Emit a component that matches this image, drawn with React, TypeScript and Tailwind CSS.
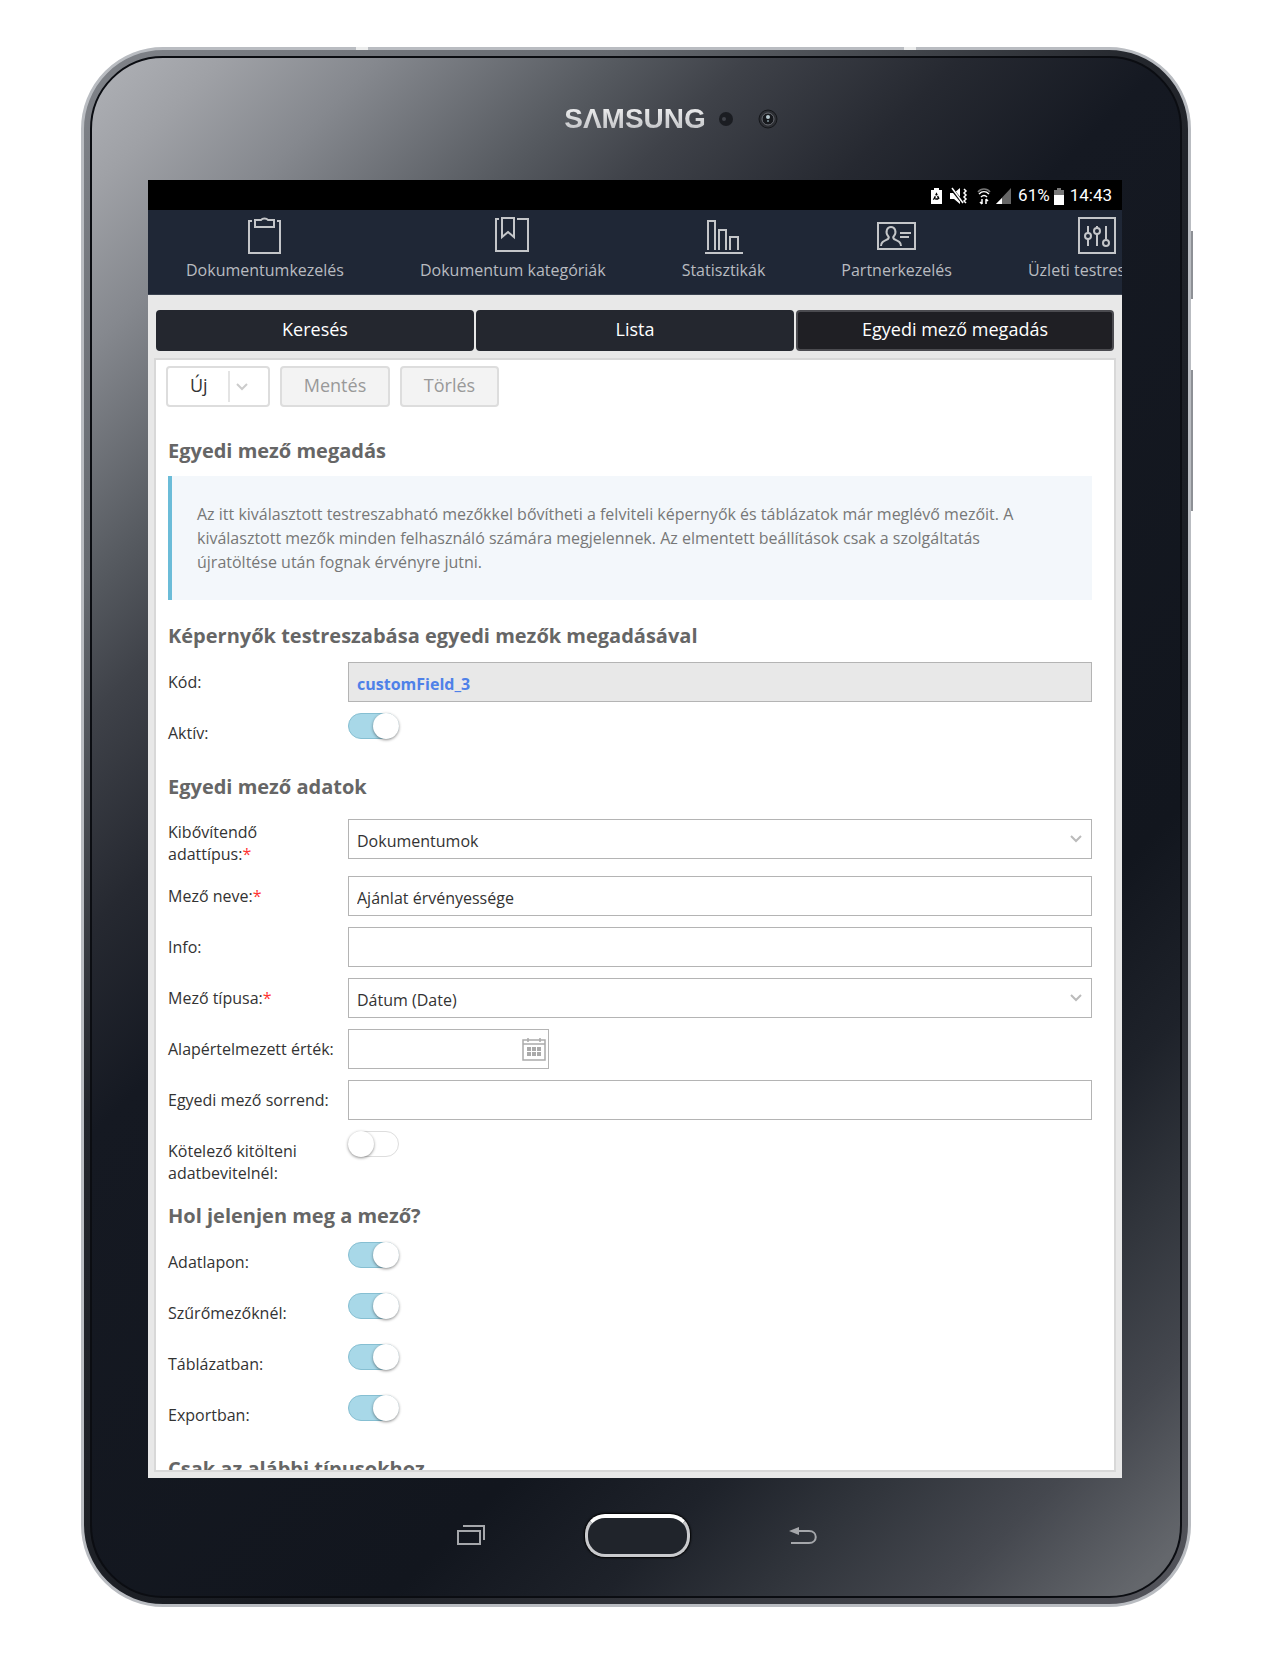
import { useState } from 'react';
import type { ReactNode } from 'react';

interface NavItem {
  title: string;
  icon: ReactNode;
}

const navItems: NavItem[] = [
  {
    title: 'Dokumentumkezelés',
    icon: (
      <>
        <path d="M8 6H5v32h31V6h-3" />
        <path d="M11 5h6a4 3 0 0 1 7 0h6v7H11z" />
      </>
    ),
  },
  {
    title: 'Dokumentum kategóriák',
    icon: (
      <>
        <path d="M7 4H4v32h32V4H25" />
        <path d="M10 3h12v19l-6-5-6 5z" />
      </>
    ),
  },
  {
    title: 'Statisztikák',
    icon: (
      <>
        <path d="M2 38h38" />
        <path d="M5 35V6h7v29M16 35V15h7v20M27 35V22h8v13" />
      </>
    ),
  },
  {
    title: 'Partnerkezelés',
    icon: (
      <>
        <path d="M2 8h37v26H2z" />
        <path d="M5 31c0-4 3-5 7-7 1-1 1-2 0-3-3-4-1-9 3-9s6 5 3 9c-1 1-1 2 0 3 4 2 7 3 7 7M24 18h11M24 22h9" />
      </>
    ),
  },
  {
    title: 'Üzleti testreszabás',
    icon: (
      <>
        <path d="M2 3h36v35H2z" />
        <path d="M11 11v7M11 24v7M20 11v2M20 19v12M29 11v13" />
        <circle cx="11" cy="21" r="3" />
        <circle cx="20" cy="16" r="3" />
        <circle cx="29" cy="28" r="3" />
      </>
    ),
  },
];

const tabs = ['Keresés', 'Lista', 'Egyedi mező megadás'];

const fieldClass = 'h-10 w-full border border-[#b4b4b4] bg-white px-2 pt-1 text-base text-[#333]';

function Heading({ children }: { children: ReactNode }) {
  return <h2 className="text-xl leading-7 font-bold text-[#666]">{children}</h2>;
}

interface RowProps {
  id: string;
  label: string;
  required?: boolean;
  children: ReactNode;
}

function Row({ id, label, required, children }: RowProps) {
  return (
    <div className="grid grid-cols-[180px_1fr] items-center">
      <label htmlFor={id} className="min-h-10 pt-[9px] pr-3 leading-[22px] text-[#333]">
        {label}
        {required && <span className="text-[#f33]">*</span>}
      </label>
      {children}
    </div>
  );
}

function Toggle({ id, defaultChecked = false }: { id: string; defaultChecked?: boolean }) {
  return (
    <span className="relative h-[26px] w-[51px] self-start">
      <input
        id={id}
        type="checkbox"
        role="switch"
        defaultChecked={defaultChecked}
        className="peer block h-[26px] w-[51px] appearance-none rounded-full border border-[#ddd] bg-white checked:border-[#86bfd2] checked:bg-[#a8d8e8]"
      />
      <span className="pointer-events-none absolute top-0 left-0 size-[26px] rounded-full bg-white shadow-[0_1px_3px_rgba(0,0,0,0.45)] peer-checked:left-[25px]" />
    </span>
  );
}

function SelectField({ id, value }: { id: string; value: string }) {
  return (
    <span className="relative">
      <select id={id} defaultValue={value} className={`${fieldClass} block appearance-none`}>
        <option>{value}</option>
      </select>
      <svg viewBox="0 0 12 8" className="pointer-events-none absolute top-4 right-2.5 h-2 w-3" fill="none" stroke="#bbb" strokeWidth="2">
        <path d="M1 1l5 5 5-5" />
      </svg>
    </span>
  );
}

function StatusBar() {
  return (
    <div className="flex h-[30px] shrink-0 items-center justify-end bg-black pt-0.5 pr-2.5 font-[Roboto,sans-serif] text-[17px] text-white">
      <svg viewBox="0 0 82 18" className="mr-1.5 h-[18px] w-[82px]" fill="none" stroke="#fff" strokeWidth="1.5">
        <path d="M1 3h3V1h5v2h3v14H1z" fill="#fff" stroke="none" />
        <path d="M4 12l2.5-5 2.5 5z" stroke="#000" strokeDasharray="3 1" />
        <path d="M20 6h4l6-5v16l-6-5h-4z" fill="#fff" stroke="none" />
        <path d="M21 1l12 15" stroke="#000" strokeWidth="3" />
        <path d="M22 1l11 15" />
        <path d="M34 2l2 2-2 2 2 2-2 2 2 2-2 2 2 2" />
        <path d="M48 5c3-4 9-4 12 0" stroke="#777" />
        <path d="M49 7c3-3 7-3 10 0M51 10c2-2 4-2 6 0" />
        <path d="M52 12v5M50 15l2 2M56 17v-5M58 14l-2-2" />
        <path d="M81 1v16H66z" fill="#666" stroke="none" />
        <path d="M72 11v6h-6z" fill="#fff" stroke="none" />
      </svg>
      <span>61%</span>
      <svg viewBox="0 0 10 17" className="mr-1.5 ml-1 h-[17px] w-2.5">
        <path d="M0 2h3V0h4v2h3v15H0z" fill="#777" />
        <path d="M0 7h10v10H0z" fill="#fff" />
      </svg>
      <span>14:43</span>
    </div>
  );
}

function MainNav() {
  return (
    <nav className="flex h-[85px] shrink-0 gap-[76px] overflow-hidden border-b border-[#3a4250] bg-[#1f2736] px-[38px]">
      {navItems.map((item) => (
        <a key={item.title} href="#" className="flex shrink-0 flex-col items-center pt-[5px] whitespace-nowrap text-[#b8bbc0]">
          <svg viewBox="0 0 41 40" className="h-10 w-[41px]" fill="none" stroke="#c4c6c9" strokeWidth="2">
            {item.icon}
          </svg>
          <span className="mt-1 leading-[22px]">{item.title}</span>
        </a>
      ))}
    </nav>
  );
}

function CustomFieldForm() {
  return (
    <form className="flex min-h-0 flex-1 flex-col overflow-hidden border-2 border-[#d8d8d8] bg-white pr-[22px] pl-3">
      <div className="-ml-0.5 flex shrink-0 gap-2.5 pt-1.5 text-lg leading-6">
        <button type="button" className="flex h-[41px] w-[104px] items-center rounded-sm border-2 border-[#ddd] bg-white pl-[22px] text-[#333]">
          <span className="pb-1">Új</span>
          <span className="ml-auto mr-5 flex h-[31px] items-center border-l-2 border-[#e4e4e4] pl-1.5">
            <svg viewBox="0 0 12 8" className="h-2 w-3" fill="none" stroke="#ccc" strokeWidth="2">
              <path d="M1 1l5 5 5-5" />
            </svg>
          </span>
        </button>
        <button type="button" className="h-[41px] w-[110px] rounded-sm border-2 border-[#ddd] bg-[#f3f3f3] pb-1 text-[#999]">
          Mentés
        </button>
        <button type="button" className="h-[41px] w-[99px] rounded-sm border-2 border-[#ddd] bg-[#f3f3f3] pb-1 text-[#999]">
          Törlés
        </button>
      </div>

      <div className="mt-[30px] shrink-0">
        <Heading>Egyedi mező megadás</Heading>
        <p className="mt-[11px] border-l-4 border-[#6bbcd8] bg-[#f3f7fb] py-[26px] pr-12 pl-[25px] leading-6 text-[#777]">
          Az itt kiválasztott testreszabható mezőkkel bővítheti a felviteli képernyők és táblázatok már meglévő mezőit. A
          kiválasztott mezők minden felhasználó számára megjelennek. Az elmentett beállítások csak a szolgáltatás
          újratöltése után fognak érvényre jutni.
        </p>
      </div>

      <section className="mt-[22px] shrink-0">
        <Heading>Képernyők testreszabása egyedi mezők megadásával</Heading>
        <div className="mt-3 flex flex-col gap-[11px]">
          <Row id="code" label="Kód:">
            <input
              id="code"
              readOnly
              defaultValue="customField_3"
              className="h-10 w-full border border-[#b4b4b4] bg-[#e8e8e8] px-2 pt-1 font-bold text-[#4f81e8]"
            />
          </Row>
          <Row id="active" label="Aktív:">
            <Toggle id="active" defaultChecked />
          </Row>
        </div>
      </section>

      <section className="mt-5 shrink-0">
        <Heading>Egyedi mező adatok</Heading>
        <div className="mt-[11px] flex flex-col gap-[11px]">
          <Row id="dataType" label="Kibővítendő adattípus:" required>
            <SelectField id="dataType" value="Dokumentumok" />
          </Row>
          <Row id="fieldName" label="Mező neve:" required>
            <input id="fieldName" defaultValue="Ajánlat érvényessége" className={fieldClass} />
          </Row>
          <Row id="info" label="Info:">
            <input id="info" className={fieldClass} />
          </Row>
          <Row id="fieldType" label="Mező típusa:" required>
            <SelectField id="fieldType" value="Dátum (Date)" />
          </Row>
          <Row id="defaultValue" label="Alapértelmezett érték:">
            <span className="relative w-[201px]">
              <input id="defaultValue" className={`${fieldClass} block`} />
              <svg viewBox="0 0 24 24" className="pointer-events-none absolute top-2 right-[3px] size-6" fill="none" stroke="#aaa">
                <path d="M1 3h22v20H1zM1 7h22M6 1v4M18 1v4" strokeWidth="1.5" />
                <path d="M5 12h14M5 17h14" strokeWidth="4" strokeDasharray="4 1" />
              </svg>
            </span>
          </Row>
          <Row id="order" label="Egyedi mező sorrend:">
            <input id="order" className={fieldClass} />
          </Row>
          <Row id="mandatory" label="Kötelező kitölteni adatbevitelnél:">
            <Toggle id="mandatory" />
          </Row>
        </div>
      </section>

      <section className="mt-[18px] shrink-0">
        <Heading>Hol jelenjen meg a mező?</Heading>
        <div className="mt-3 flex flex-col gap-[11px]">
          <Row id="onSheet" label="Adatlapon:">
            <Toggle id="onSheet" defaultChecked />
          </Row>
          <Row id="inFilters" label="Szűrőmezőknél:">
            <Toggle id="inFilters" defaultChecked />
          </Row>
          <Row id="inTable" label="Táblázatban:">
            <Toggle id="inTable" defaultChecked />
          </Row>
          <Row id="inExport" label="Exportban:">
            <Toggle id="inExport" defaultChecked />
          </Row>
        </div>
      </section>

      <section className="mt-5 shrink-0">
        <Heading>Csak az alábbi típusokhoz</Heading>
      </section>
    </form>
  );
}

function DeviceHeader() {
  return (
    <div className="grid h-[122px] shrink-0 grid-cols-[1fr_auto_1fr] items-center">
      <span
        aria-label="SAMSUNG"
        className="col-start-2 bg-linear-to-b from-white to-[#b0b2b6] bg-clip-text font-['Liberation_Sans',sans-serif] text-[28px] font-bold text-transparent"
      >
        SΛMSUNG
      </span>
      <svg viewBox="0 0 60 20" className="ml-3 h-5 w-[60px]">
        <circle cx="8" cy="10" r="7" fill="#1b1d22" />
        <circle cx="6" cy="10" r="2" fill="#40434a" />
        <circle cx="50" cy="10" r="9" fill="#2c2e33" stroke="#15171b" strokeWidth="1" />
        <circle cx="50" cy="10" r="6" fill="#17191d" stroke="#6a6d74" />
        <circle cx="50" cy="8" r="2" fill="#b7c9cf" />
        <circle cx="50" cy="12" r="1" fill="#7f9299" />
      </svg>
    </div>
  );
}

function DeviceKeys() {
  return (
    <div className="flex h-[118px] shrink-0 items-center justify-center gap-[99px] pb-1 pl-0.5">
      <button type="button" aria-label="Recent apps">
        <svg viewBox="0 0 30 22" className="h-[22px] w-[30px]" fill="none" stroke="#a5a7ab" strokeWidth="2">
          <path d="M2 7h22v13H2zM7 2h21v14" />
        </svg>
      </button>
      <button
        type="button"
        aria-label="Home"
        className="h-[43px] w-[105px] rounded-[20px] border-3 border-t-4 border-[#c9cacd] border-t-white bg-[#20242b] shadow-[0_0_2px_1px_#000]"
      />
      <button type="button" aria-label="Back">
        <svg viewBox="0 0 28 22" className="h-[22px] w-7" fill="none" stroke="#a5a7ab" strokeWidth="2">
          <path d="M8 7h12c9 0 9 12 0 12H2" />
          <path d="M0 7l10-4v8z" fill="#a5a7ab" stroke="none" />
        </svg>
      </button>
    </div>
  );
}

export default function App() {
  const [activeTab, setActiveTab] = useState('Egyedi mező megadás');

  return (
    <div className="flex h-screen bg-white pt-[47px] pr-[79px] pb-[51px] pl-[81px] font-['Open_Sans',sans-serif] text-base">
      <div className="relative flex min-w-0 flex-1 rounded-[82px] border-3 border-[#b9bcc1] bg-[linear-gradient(135deg,#808389,#666a70_20%,#23262c_40%,#1a1d23_65%,#55565d)] p-1.5">
        <span className="absolute -right-[5px] top-[181px] h-[68px] w-0.5 bg-[#8d9095]" />
        <span className="absolute -right-[5px] top-[320px] h-[141px] w-0.5 bg-[#8d9095]" />
        <span className="absolute -top-[3px] left-[272px] h-[3px] w-3 bg-[#eceded]" />
        <span className="absolute -top-[3px] right-[272px] h-[3px] w-3 bg-[#eceded]" />
        <div className="flex min-w-0 flex-1 flex-col rounded-[73px] border-2 border-[#0b0d12] bg-[linear-gradient(135deg,#b0b2b7_0%,#9fa1a6_5%,#85888e_11%,#565a60_20%,#3f4249_25%,#262931_33%,#151922_41%,#12161e_70%,#1e222a_78%,#30343b_84%,#45484f_91%,#64676c_98%)] pr-[58px] pl-14">
          <DeviceHeader />
          <div className="flex min-h-0 flex-1 flex-col bg-[#e8e8e8]">
            <StatusBar />
            <MainNav />
            <div className="grid shrink-0 grid-cols-3 gap-0.5 px-2 pt-[15px] pb-[7px]">
              {tabs.map((tab) => (
                <button
                  key={tab}
                  type="button"
                  onClick={() => setActiveTab(tab)}
                  className={
                    tab === activeTab
                      ? 'h-[41px] rounded-sm border-2 border-[#4b4b50] bg-[#1f1f24] pb-1 text-lg text-white'
                      : 'h-[41px] rounded-sm border-2 border-[#24272f] bg-[#24272f] pb-1 text-lg text-white'
                  }
                >
                  {tab}
                </button>
              ))}
            </div>
            <div className="flex min-h-0 flex-1 px-1.5 pb-1.5">
              <CustomFieldForm />
            </div>
          </div>
          <DeviceKeys />
        </div>
      </div>
    </div>
  );
}
